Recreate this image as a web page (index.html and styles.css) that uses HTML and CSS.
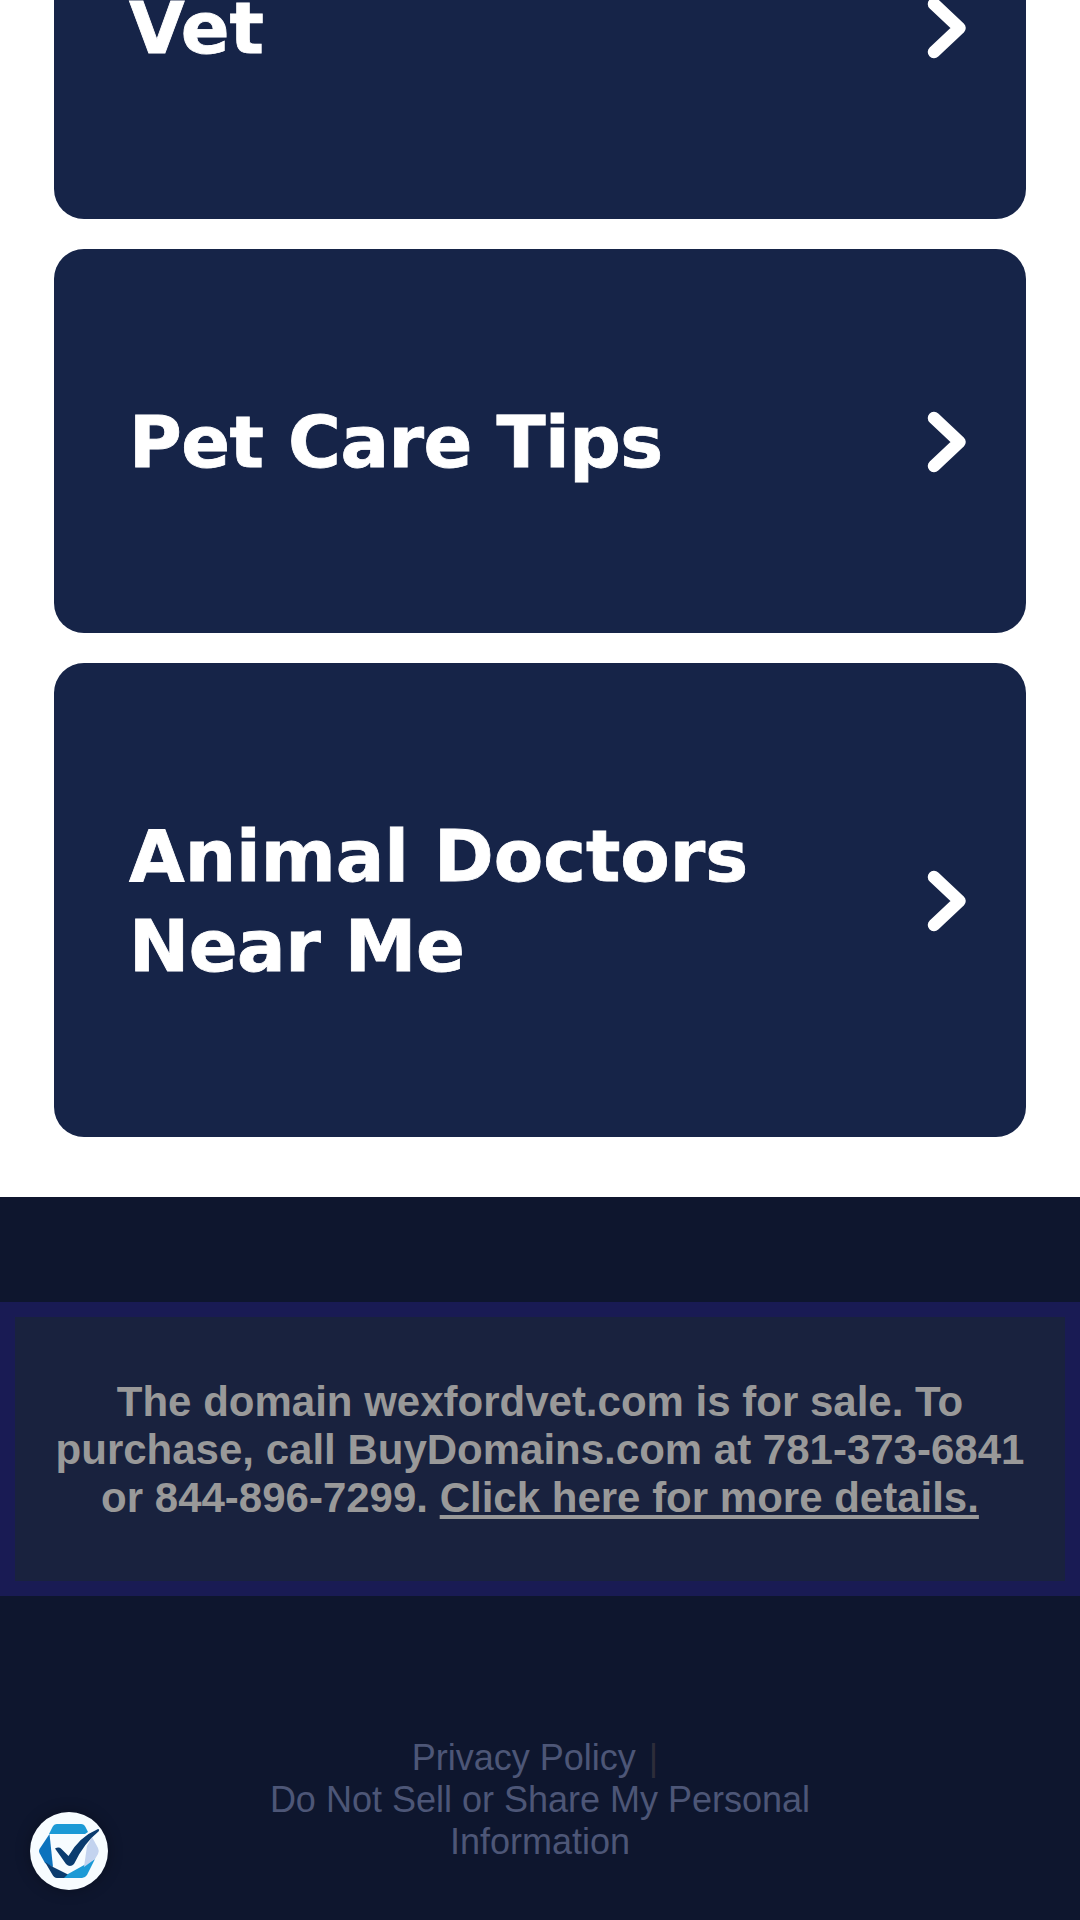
FILE: index.html
```html
<!DOCTYPE html>
<html lang="en">
<head>
    <meta charset="UTF-8">
    <meta name="viewport" content="width=device-width, initial-scale=1.0">
    <title>wexfordvet.com</title>
    <link rel="stylesheet" href="styles.css">
</head>
<body>
    <!-- Related searches -->
    <main class="links">
        <a class="card" href="#">
            <span class="card-title">Vet</span>
            <svg class="arrow" viewBox="0 0 40 62"><path d="M7 7 L32.500 31 L7 55"/></svg>
        </a>
        <a class="card" href="#">
            <span class="card-title"><span class="tight">Pet Care Tips</span></span>
            <svg class="arrow" viewBox="0 0 40 62"><path d="M7 7 L32.500 31 L7 55"/></svg>
        </a>
        <a class="card" href="#">
            <span class="card-title">Animal Doctors <span class="tight">Near Me</span></span>
            <svg class="arrow" viewBox="0 0 40 62"><path d="M7 7 L32.500 31 L7 55"/></svg>
        </a>
    </main>

    <footer class="footer">
        <div class="sale">
            The domain wexfordvet.com is for sale. To purchase, call BuyDomains.com at 781-373-6841 or 844-896-7299. <a href="#">Click here for more details.</a>
        </div>
        <div class="legal">
            <a class="policy" href="#">Privacy Policy</a> |&nbsp;<br>
            <a href="#">Do Not Sell or Share My Personal Information</a>
        </div>
    </footer>

    <!-- Privacy settings button -->
    <button class="consent" aria-label="Privacy settings">
        <svg viewBox="0 0 78 78">
            <path fill="#1c9ad6" d="M19 22 L22.500 15 Q24 12 27 12 H51 Q54 12 55.500 15 L58 20 L55 22 Z"/>
            <path fill="#0c72bd" d="M19.500 22 L9.500 37 Q8.500 39 9.500 41 L15 51 L23 55 Z"/>
            <path fill="#0b3c6f" d="M15 50 L22 62 Q24 66 27 66 H35 L39 63 L23 55 Z"/>
            <path fill="#1c9ad6" d="M34 66 H52 Q55 66 57 63 L65 47 L38 62 Z"/>
            <path fill="#c3d3ef" d="M62 25 L68 36 Q69.500 39 68 42 L65 47 L54 55 L57 34 Z"/>
            <path fill="#0b3c6f" d="M25 36.500 Q29 34.500 31.500 37 L38.500 44 Q49 25 68 17 Q70 17 68.500 19.500 Q54 31 44 52 Q40 56 36 52 Z"/>
        </svg>
    </button>
</body>
</html>
```

FILE: styles.css
```css
* {
    box-sizing: border-box;
}

body {
    margin: 0;
    height: 1920px;
    overflow: hidden;
    background-color: #fff;
    font-family: "Liberation Sans", Arial, sans-serif;
}

.links {
    display: flex;
    flex-direction: column;
    gap: 30px;
    width: 90%;
    margin: -165px auto 60px;
}

.card {
    display: flex;
    align-items: center;
    justify-content: space-between;
    padding: 148px 59px 146px 75px;
    border-radius: 30px;
    background-color: #162448;
    color: #fff;
    text-decoration: none;
}

.card-title {
    width: 720px;
    font-family: "DejaVu Sans", Verdana, sans-serif;
    font-size: 72px;
    font-weight: bold;
    line-height: 90px;
    -webkit-text-stroke: 0.8px #fff;
}

.tight {
    letter-spacing: -0.5px;
}

.arrow {
    width: 40px;
    height: 62px;
    fill: none;
    stroke: #fff;
    stroke-width: 12.5;
    stroke-linecap: round;
    stroke-linejoin: round;
}

.footer {
    height: 723px;
    padding-top: 105px;
    background-color: #0e162e;
}

.sale {
    padding: 61px 30px 59px;
    border: 15px solid #191b54;
    background-color: #19223e;
    color: #999;
    font-size: 42px;
    font-weight: bold;
    line-height: 48px;
    text-align: center;
}

.sale a {
    color: #999;
}

.legal {
    width: 600px;
    margin: 141px auto 0;
    color: #2d2d3a;
    font-size: 36px;
    line-height: 42px;
    text-align: center;
}

.legal a {
    color: #4d5677;
    text-decoration: none;
}

.legal .policy {
    margin-right: 3px;
}

.consent {
    position: fixed;
    left: 30px;
    bottom: 30px;
    width: 78px;
    height: 78px;
    padding: 0;
    border: none;
    border-radius: 50%;
    background-color: #f7fcff;
    box-shadow: 0 0 15px rgba(0, 0, 0, 0.3);
}

.consent svg {
    display: block;
}
```
